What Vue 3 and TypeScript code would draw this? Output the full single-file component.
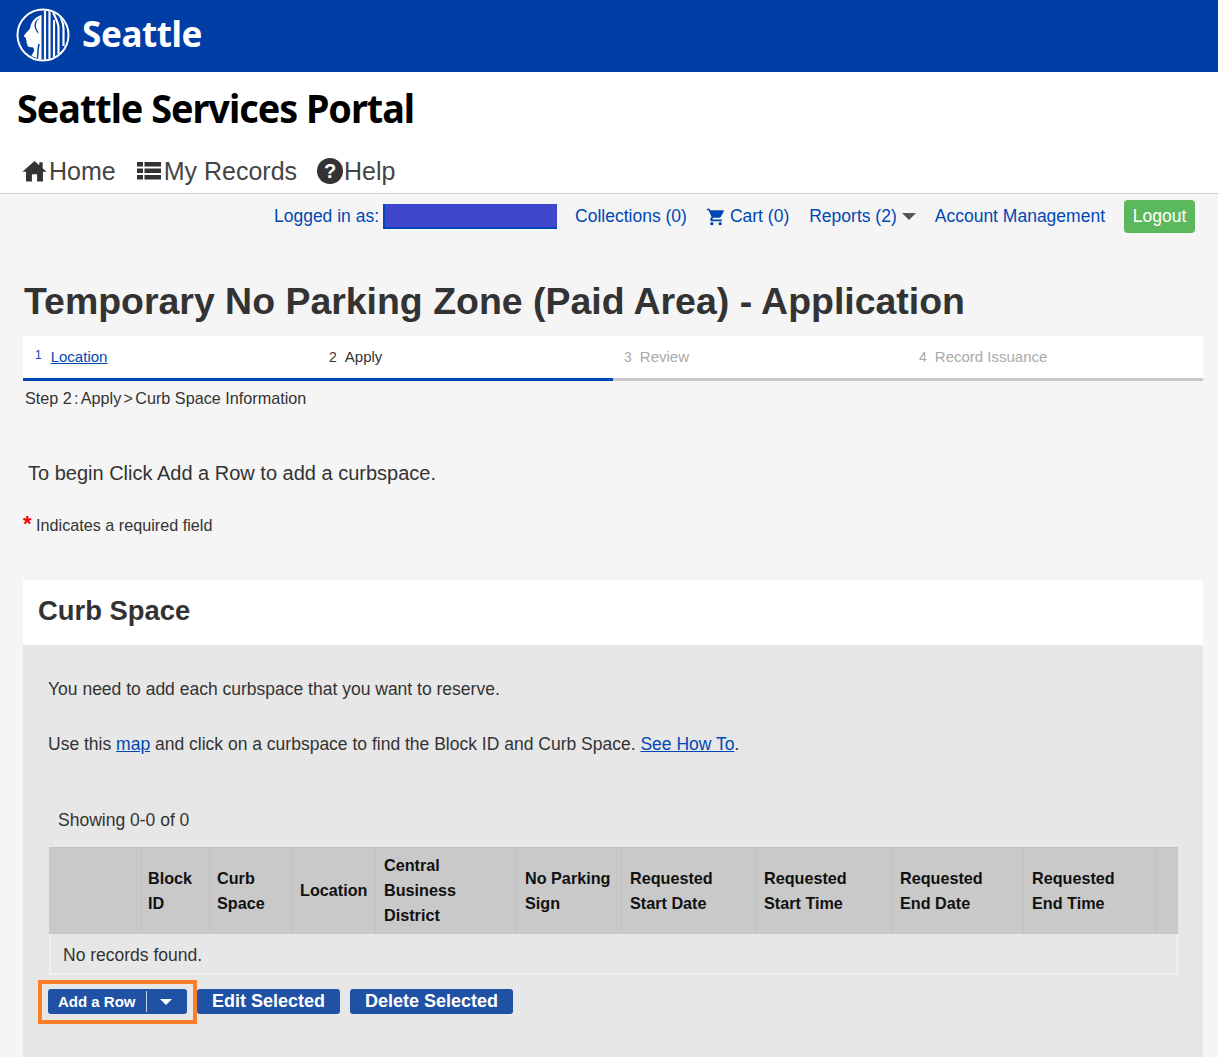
<template>
  <div class="page">
    <header class="banner">
      <svg class="seal" viewBox="0 0 54 54" aria-hidden="true">
        <defs>
          <clipPath id="seal-disc"><circle cx="27" cy="27" r="24.500" /></clipPath>
        </defs>
        <circle cx="27" cy="27" r="25.500" fill="#003da5" stroke="#fff" stroke-width="2" />
        <g clip-path="url(#seal-disc)">
          <path d="M25.500 7C20 8.500 15.500 13 14.500 18.500C14 22 10.500 24 8 27.500C7.500 28.800 9 29.300 10.200 29.800C10 31 9.700 32 10.800 33C10.200 34 10.600 35 11.200 36C11.200 38.500 13.200 39.600 16 39.200C17.600 39.200 18.500 41 18 43C17.500 45 16 46 15.500 48L25.500 52Z" fill="#fff" />
          <path d="M24 10C21 12 19.500 15 20 19C20.500 22 22.500 23 22.500 26C20.500 24 18.500 21 18.500 17C18.500 14 20.500 11.500 24 10Z" fill="#003da5" />
          <path d="M23 36C22 40 22 44 21.500 50" fill="none" stroke="#003da5" stroke-width="1.500" />
          <path d="M29 2V52M33.500 2V52M38 12V52" fill="none" stroke="#fff" stroke-width="2.200" />
          <path d="M37 2C37 8 42.500 12 42.500 20V46M43 3C43 8 47.500 12 47.500 20V38" fill="none" stroke="#fff" stroke-width="2.200" />
        </g>
      </svg>
      <span class="city">Seattle</span>
    </header>

    <section class="masthead">
      <div class="portal">Seattle Services Portal</div>
      <nav class="main-nav">
        <a class="nav-home">
          <svg viewBox="0 0 26 24" class="nav-icon"><path d="M13 1.500 0.500 12.800H4.200V23H10.300V15.500H15.700V23H21.800V12.800H25.500L21.500 9.200V3H18V6Z" fill="#333" /></svg>
          <span>Home</span>
        </a>
        <a>
          <svg viewBox="0 0 24 20" class="nav-icon list"><path d="M0 1H6V5.500H0ZM7.500 1H24V5.500H7.500ZM0 7.500H6V12H0ZM7.500 7.500H24V12H7.500ZM0 14H6V18.500H0ZM7.500 14H24V18.500H7.500Z" fill="#333" /></svg>
          <span>My Records</span>
        </a>
        <a>
          <svg viewBox="0 0 26 26" class="nav-icon help">
            <circle cx="13" cy="13" r="13" fill="#333" />
            <text x="13" y="20" text-anchor="middle" class="help-mark">?</text>
          </svg>
          <span>Help</span>
        </a>
      </nav>
    </section>

    <div class="account-row">
      <span class="link">Logged in as:</span>
      <span class="redacted"></span>
      <span class="link collections">Collections (0)</span>
      <span class="link cart">
        <svg viewBox="0 0 24 24" class="cart-icon"><path d="M7 18a2 2 0 1 0 0 4 2 2 0 0 0 0-4ZM1 2v2h2l3.600 7.600-1.400 2.400C4.500 15.400 5.500 17 7 17h12v-2H7.400l1.100-2h7.500c.7 0 1.400-.4 1.700-1l3.600-6.500c.4-.7-.1-1.500-.9-1.500H5.200l-.9-2ZM17 18a2 2 0 1 0 0 4 2 2 0 0 0 0-4Z" fill="#0047b3" /></svg>
        Cart (0)
      </span>
      <span class="link reports">Reports (2)<i class="caret"></i></span>
      <span class="link manage">Account Management</span>
      <button class="logout">Logout</button>
    </div>

    <h1 class="page-title">Temporary No Parking Zone (Paid Area) - Application</h1>

    <ol class="steps">
      <li v-for="step in steps" :key="step.num" class="step" :class="step.state">
        <span class="step-num">{{ step.num }}</span>
        <span class="step-label">{{ step.label }}</span>
      </li>
    </ol>
    <div class="crumb">
      <span>Step 2</span><span>:</span><span>Apply</span><span>&gt;</span><span>Curb Space Information</span>
    </div>

    <p class="intro">To begin Click Add a Row to add a curbspace.</p>
    <p class="required"><b>*</b> Indicates a required field</p>

    <section class="card">
      <h2 class="card-title">Curb Space</h2>
      <div class="card-body">
        <p class="note">You need to add each curbspace that you want to reserve.</p>
        <p class="note second">
          Use this <a class="inline-link">map</a> and click on a curbspace to find the Block ID and Curb Space.
          <a class="inline-link">See How To</a>.
        </p>
        <div class="showing">Showing 0-0 of 0</div>

        <div class="grid-table">
          <div class="grid-head">
            <div v-for="(col, i) in columns" :key="i" class="head-cell">
              <span>{{ col }}</span>
            </div>
          </div>
          <div class="empty">No records found.</div>
        </div>

        <div class="actions">
          <div class="highlight">
            <button class="btn split">
              <span>Add a Row</span>
              <span class="split-rule"></span>
              <i class="split-caret"></i>
            </button>
          </div>
          <button class="btn large">Edit Selected</button>
          <button class="btn large">Delete Selected</button>
        </div>
      </div>
    </section>
  </div>
</template>

<script setup lang="ts">
interface Step {
  num: number;
  label: string;
  state: string;
}

const steps: Step[] = [
  { num: 1, label: 'Location', state: 'done' },
  { num: 2, label: 'Apply', state: 'active' },
  { num: 3, label: 'Review', state: 'todo' },
  { num: 4, label: 'Record Issuance', state: 'todo' },
];

const columns: string[] = [
  '',
  'Block ID',
  'Curb Space',
  'Location',
  'Central Business District',
  'No Parking Sign',
  'Requested Start Date',
  'Requested Start Time',
  'Requested End Date',
  'Requested End Time',
  '',
];
</script>

<style>
html,
body {
  margin: 0;
  height: 1057px;
  overflow: hidden;
  background: #f5f5f5;
}
</style>

<style scoped>
.page {
  font-family: "Liberation Sans", Arial, sans-serif;
  color: #333;
}

.banner {
  height: 72px;
  background: #003da5;
  display: flex;
  align-items: center;
  padding-left: 16px;
  box-sizing: border-box;
}

.seal {
  width: 54px;
  height: 54px;
  margin-top: -2px;
}

.city {
  margin-left: 12px;
  margin-top: -4px;
  font-family: "Noto Sans", sans-serif;
  font-weight: 700;
  font-size: 35px;
  line-height: 40px;
  color: #fff;
  letter-spacing: -0.4px;
}

.masthead {
  height: 122px;
  box-sizing: border-box;
  background: #fff;
  border-bottom: 1px solid #ccc;
  padding: 12px 0 0 17px;
}

.portal {
  font-family: "Noto Sans", sans-serif;
  font-weight: 700;
  font-size: 40px;
  line-height: 48px;
  color: #000;
  letter-spacing: -1.1px;
  width: max-content;
  transform: scaleX(0.945);
  transform-origin: left center;
}

.main-nav {
  display: flex;
  gap: 20px;
  margin: 24px 0 0 5px;
  font-size: 25px;
  line-height: 30px;
  color: #444;
}

.main-nav a {
  display: flex;
  align-items: center;
}

.main-nav .nav-home {
  margin-right: 1px;
}

.nav-icon {
  width: 25px;
  height: 24px;
  margin-right: 2px;
}

.nav-icon.list {
  width: 24px;
  height: 20px;
  margin-right: 3px;
}

.nav-icon.help {
  width: 26px;
  height: 26px;
  margin-right: 1px;
}

.help-mark {
  font-family: "Liberation Sans", sans-serif;
  font-weight: 700;
  font-size: 20px;
  fill: #fff;
}

.account-row {
  height: 33px;
  display: flex;
  align-items: center;
  justify-content: flex-end;
  padding: 6px 23px 0 0;
  font-size: 17.5px;
}

.link {
  color: #0047b3;
  display: inline-flex;
  align-items: center;
  white-space: nowrap;
}

.redacted {
  width: 174px;
  height: 25px;
  box-sizing: border-box;
  margin-left: 4px;
  background: #3f48cc;
  border-left: 2px solid #0047b3;
  border-bottom: 2px solid #0047b3;
}

.collections {
  margin-left: 18px;
}

.cart {
  margin-left: 19px;
}

.cart-icon {
  width: 20px;
  height: 20px;
  margin-right: 4px;
}

.reports {
  margin-left: 20px;
}

.caret {
  width: 0;
  height: 0;
  margin-left: 5px;
  border-left: 7px solid transparent;
  border-right: 7px solid transparent;
  border-top: 7px solid #555;
}

.manage {
  margin-left: 19px;
}

.logout {
  margin-left: 19px;
  width: 71px;
  height: 33px;
  padding: 0;
  border: 0;
  border-radius: 4px;
  background: #5cb85c;
  color: #fff;
  font: 17.5px "Liberation Sans", Arial, sans-serif;
}

.page-title {
  margin: 47px 0 0 24px;
  font-size: 37.45px;
  line-height: 42px;
  font-weight: 700;
  color: #333;
}

.steps {
  list-style: none;
  margin: 14px 15px 0 23px;
  padding: 0;
  display: grid;
  grid-template-columns: repeat(4, 1fr);
  background: #fff;
}

.step {
  height: 45px;
  box-sizing: border-box;
  padding: 11px 0 0 11px;
  border-bottom: 3px solid #c8c8c8;
  font-size: 15px;
  line-height: 20px;
  color: #aaa;
  display: flex;
  gap: 8px;
}

.step.done {
  padding-left: 12px;
  gap: 9px;
}

.step.done,
.step.active {
  border-bottom-color: #0047b3;
}

.step.done {
  color: #0047b3;
}

.step-num {
  font-size: 14px;
}

.step.done .step-num {
  font-size: 12px;
  margin-top: -2px;
}

.step.done .step-label {
  text-decoration: underline;
}

.step.active {
  color: #333;
}

.crumb {
  display: flex;
  gap: 2.250px;
  margin: 8px 0 0 25px;
  font-size: 16.2px;
  line-height: 18px;
}

.intro {
  margin: 54px 0 0 28px;
  font-size: 20px;
  line-height: 24px;
}

.required {
  margin: 29px 0 0 23px;
  font-size: 16.2px;
  line-height: 20px;
}

.required b {
  color: #e00;
  font-size: 22px;
}

.card {
  margin: 45px 15px 0 23px;
}

.card-title {
  margin: 0;
  height: 65px;
  box-sizing: border-box;
  padding: 15px 0 0 15px;
  background: #fff;
  font-size: 27.4px;
  line-height: 32px;
  font-weight: 700;
}

.card-body {
  background: #e7e7e7;
  padding: 33px 25px 40px;
}

.note {
  margin: 0;
  font-size: 17.5px;
  line-height: 22px;
}

.note.second {
  margin-top: 33px;
}

.inline-link {
  color: #0047b3;
  text-decoration: underline;
}

.showing {
  margin: 54px 0 0 10px;
  font-size: 17.5px;
  line-height: 22px;
}

.grid-table {
  margin: 16px 0 0 1px;
  width: 1129px;
}

.grid-head {
  display: grid;
  grid-template-columns: 93px 68px 82px 84px 141px 105px 134px 136px 132px 133px 21px;
  height: 87px;
  box-sizing: border-box;
  background: #c9c9c9;
  border-top: 1px solid #c2c2c2;
}

.head-cell {
  display: flex;
  align-items: center;
  padding: 0 7px 0 8px;
  border-right: 1px solid #c2c2c2;
  box-sizing: border-box;
  font-size: 16.2px;
  line-height: 25px;
  font-weight: 700;
  color: #111;
}

.head-cell span {
  max-width: 110px;
}

.head-cell:nth-child(2) {
  padding-left: 6px;
}

.head-cell:nth-child(3) {
  padding-left: 7px;
}

.head-cell:nth-child(4) span,
.head-cell:nth-child(5) span {
  margin-top: -2px;
}

.head-cell:last-child {
  border-right: 0;
}

.empty {
  height: 41px;
  box-sizing: border-box;
  padding-left: 12px;
  border: 2px solid #f0f0f0;
  border-top: 0;
  font-size: 17.5px;
  line-height: 42px;
}

.actions {
  display: flex;
  align-items: flex-start;
  margin: 5px 0 0 -10px;
}

.highlight {
  width: 159px;
  height: 44px;
  box-sizing: border-box;
  border: 4px solid #ff7f27;
  padding: 5px 0 0 6px;
}

.btn {
  height: 25px;
  border: 0;
  border-radius: 3px;
  background: #1f51a5;
  color: #fff;
  font-family: "Liberation Sans", Arial, sans-serif;
  font-weight: 700;
  padding: 0;
}

.split {
  width: 139px;
  display: flex;
  align-items: center;
  padding-left: 10px;
  box-sizing: border-box;
  font-size: 15px;
}

.split-rule {
  width: 1px;
  height: 21px;
  margin-left: 10px;
  background: #c9d5ea;
}

.split-caret {
  width: 0;
  height: 0;
  margin-left: 13px;
  border-left: 6px solid transparent;
  border-right: 6px solid transparent;
  border-top: 6px solid #fff;
}

.btn.large {
  font-size: 18px;
  padding: 0 15px;
  margin: 9px 0 0 10px;
}

.highlight + .btn.large {
  margin-left: 0;
}
</style>
